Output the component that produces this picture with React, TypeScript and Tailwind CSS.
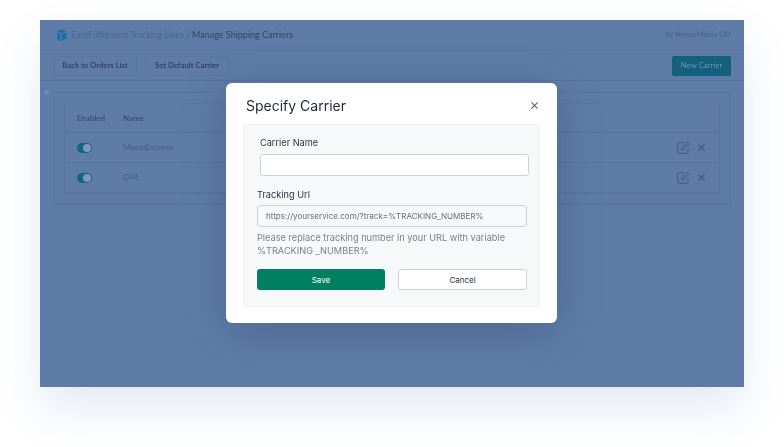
import React from 'react';

function Toggle() {
    return (
        <span className="flex h-[10px] w-[15px] items-center justify-end rounded-full bg-[#13687f] px-[1px]">
            <span className="h-[8px] w-[8px] rounded-full bg-[#7f99bd]" />
        </span>
    );
}

function EditIcon() {
    return (
        <svg width="13" height="13" viewBox="0 0 13 13" fill="none" stroke="#40597f" strokeWidth="1" className="shrink-0">
            <path d="M11 7.5V11.2a1 1 0 0 1-1 1H1.8a1 1 0 0 1-1-1V2.8a1 1 0 0 1 1-1h5" />
            <path d="M4.5 8.8l.5-2.2L10.4 1.1l1.6 1.6-5.4 5.5z" />
        </svg>
    );
}

function CloseIcon({ color, size }: { color: string; size: number }) {
    return (
        <svg width={size} height={size} viewBox="0 0 10 10" fill="none" stroke={color} strokeWidth="1.2" className="shrink-0">
            <path d="M1.5 1.5l7 7M8.5 1.5l-7 7" />
        </svg>
    );
}

function CarrierRow({ name }: { name: string }) {
    return (
        <div className="flex h-[30px] items-center border-t border-[#57739e] pl-[12px] pr-[13px]">
            <div className="w-[46px]">
                <Toggle />
            </div>
            <span className="flex-1 text-[8.2px] text-[#435d84]">{name}</span>
            <div className="flex items-center gap-[7px]">
                <EditIcon />
                <CloseIcon color="#40597f" size={9} />
            </div>
        </div>
    );
}

function Page() {
    return (
        <div className="flex h-[367px] w-[704px] flex-col bg-[#5f7ca8] font-['Lato',sans-serif] shadow-[0_22px_42px_rgba(90,130,180,0.16)]">
            <header className="flex h-[31px] shrink-0 items-center border-b border-[#5a76a2] pl-[14px] pr-[13px]">
                <svg width="14" height="13" viewBox="0 0 14 13" className="-ml-px mr-[3px] shrink-0 blur-[0.3px]">
                    <path d="M8 0.5L13.5 2.8v6.6L8 12.5 4.2 10V2.8z" fill="#1c6fa3" />
                    <path d="M8 5v7.5M4.2 3l3.8 2 5.5-2.2" stroke="#6f8db5" strokeWidth="0.7" fill="none" />
                    <path d="M0.5 5.5h3.5M1.5 7.5h2.7" stroke="#4a7fae" strokeWidth="0.8" />
                </svg>
                <span className="ml-px text-[8.7px] text-[#4a6590] blur-[0.3px]">EasyFulfillment Tracking Links</span>
                <span className="mx-[2px] text-[9px] text-[#4a6590] blur-[0.3px]">/</span>
                <span className="text-[9px] text-[#2f4669] blur-[0.3px]">Manage Shipping Carriers</span>
                <span className="ml-auto text-[7.7px] text-[#47628b] blur-[0.3px]">by NexusMedia OÜ</span>
            </header>
            <div className="flex h-[30px] shrink-0 items-center gap-[8px] border-b border-[#55709b] px-[13px]">
                <div className="flex h-[20px] w-[84px] items-center justify-center rounded-[2px] border border-[#5a76a1] text-[7.7px] font-bold text-[#2f4669] blur-[0.2px]">
                    Back to Orders List
                </div>
                <div className="flex h-[20px] w-[84px] items-center justify-center rounded-[2px] border border-[#5a76a1] text-[7.7px] font-bold text-[#2f4669] blur-[0.2px]">
                    Set Default Carrier
                </div>
                <div className="ml-auto flex h-[20px] w-[59px] items-center justify-center rounded-[2px] bg-[#13607f] text-[7.8px] text-[#6d94ae] blur-[0.2px]">
                    New Carrier
                </div>
            </div>
            <div className="relative flex-1 px-[13px] pt-[11px]">
                <span className="absolute left-[4px] top-[9px] h-[5px] w-[5px] rounded-full bg-[#6f8ab3] blur-[0.4px]" />
                <div className="rounded-[2px] border border-[#5874a0] px-[10px] py-[10px] shadow-[0_1px_0_#5b77a3]">
                    <div className="rounded-[2px] border border-[#5a76a1] shadow-[0_1px_0_#57739e]">
                        <div className="flex h-[28px] items-center pl-[12px] text-[8px] text-[#2f4669] blur-[0.2px]">
                            <span className="w-[46px]">Enabled</span>
                            <span>Name</span>
                        </div>
                        <CarrierRow name="MeestExpress" />
                        <CarrierRow name="DHL" />
                    </div>
                </div>
            </div>
        </div>
    );
}

function Modal() {
    return (
        <div className="absolute left-[226px] top-[83px] h-[240px] w-[331px] rounded-[6px] bg-white px-[17px] pt-[10px] font-['Inter',sans-serif] shadow-[0_8px_40px_rgba(50,75,115,0.45)]">
            <div className="flex h-[24px] items-center justify-between pl-[3px] pr-[1px]">
                <h2 className="text-[14px] font-normal text-[#1f2a37] blur-[0.2px]">Specify Carrier</h2>
                <CloseIcon color="#5d6672" size={9} />
            </div>
            <div className="mt-[7px] h-[183px] rounded-[3px] border border-[#eef0f3] bg-[#f7f8fa] pl-[13px] pr-[13px] pt-[11px]">
                <label className="block pl-[3px] text-[9.2px] leading-[14px] text-[#2b3440] blur-[0.2px]">Carrier Name</label>
                <div className="ml-[3px] mr-[-3px] mt-[4px] h-[22px] rounded-[3px] border border-[#cdd2d8] bg-white" />
                <label className="mt-[12px] block text-[9.2px] leading-[14px] text-[#2b3440] blur-[0.2px]">Tracking Url</label>
                <div className="mr-[-1px] mt-[3px] flex h-[22px] items-center rounded-[3px] border border-[#cdd2d8] bg-[#f7f8fa] pl-[8px] text-[8px] tracking-[0.02px] text-[#666e79]">
                    <span className="blur-[0.2px]">https://yourservice.com/?track=%TRACKING_NUMBER%</span>
                </div>
                <p className="mt-[5px] text-[9.2px] leading-[12.5px] text-[#7a828c] blur-[0.2px]">
                    Please replace tracking number in your URL with variable
                    <br />
                    %TRACKING _NUMBER%
                </p>
                <div className="mt-[12px] flex gap-[13px]">
                    <div className="flex h-[21px] w-[128px] shrink-0 items-center justify-center rounded-[3px] bg-[#008060] text-[8px] text-white">
                        Save
                    </div>
                    <div className="flex h-[21px] w-[129px] shrink-0 items-center justify-center rounded-[3px] border border-[#cdd2d8] bg-white text-[8px] text-[#2b3440]">
                        Cancel
                    </div>
                </div>
            </div>
        </div>
    );
}

export default function App() {
    return (
        <div className="relative h-[447px] w-[784px] overflow-hidden bg-white pl-[40px] pt-[20px]">
            <Page />
            <Modal />
        </div>
    );
}
